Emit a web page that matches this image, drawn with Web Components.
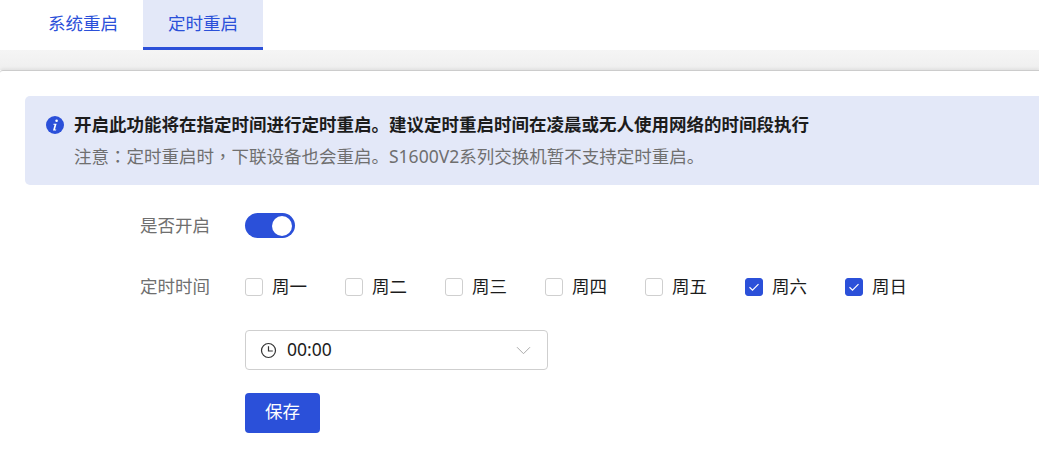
<!DOCTYPE html>
<html lang="zh">
<head>
<meta charset="utf-8">
<title>定时重启</title>
<style>
    html, body { margin: 0; height: 100%; background: #fff; overflow: hidden; }
    body { font-family: "Noto Sans", "Noto Sans CJK SC", sans-serif; font-size: 17.5px; }
</style>
</head>
<body>
<reboot-page></reboot-page>

<script>
class RebootTabs extends HTMLElement {
    constructor(){
        super();
        this.attachShadow({ mode: 'open' }).innerHTML = `
        <style>
            :host { display: flex; height: 50px; padding-left: 23px; background: #fff; }
            .tab {
                box-sizing: border-box;
                width: 120px;
                height: 50px;
                padding-top: 11px;
                text-align: center;
                line-height: 24px;
                color: #2b50d9;
            }
            .tab.active { background: #e3e8f8; border-bottom: 3px solid #2b50d9; }
        </style>
        <div class="tab">系统重启</div>
        <div class="tab active">定时重启</div>
        `;
    }
}
customElements.define('reboot-tabs', RebootTabs);

class RebootAlert extends HTMLElement {
    constructor(){
        super();
        this.attachShadow({ mode: 'open' }).innerHTML = `
        <style>
            :host {
                display: flex;
                box-sizing: border-box;
                width: 1100px;
                height: 89px;
                margin-left: 25px;
                padding: 15px 0 0 21px;
                gap: 10px;
                background: #e3e8f8;
                border-radius: 5px;
            }
            svg { flex: none; margin-top: 5px; }
            .title { line-height: 27px; font-weight: 700; color: #1c1c1c; }
            .note { line-height: 27px; margin-top: 4px; color: #6f6f6f; }
        </style>
        <svg width="18" height="18" viewBox="0 0 18 18">
            <circle cx="9" cy="9" r="9" fill="#2b50d9"/>
            <circle cx="10.6" cy="4.8" r="1.3" fill="#fff"/>
            <path d="M7.6 7.8h3l-1.6 5.6h1.3l-.3 1H7l1.6-5.6H7.3z" fill="#fff"/>
        </svg>
        <div>
            <div class="title"><slot name="title"></slot></div>
            <div class="note"><slot name="note"></slot></div>
        </div>
        `;
    }
}
customElements.define('reboot-alert', RebootAlert);

class FormRow extends HTMLElement {
    constructor(){
        super();
        this.attachShadow({ mode: 'open' }).innerHTML = `
        <style>
            :host { display: grid; grid-template-columns: 210px 1fr; column-gap: 35px; align-items: center; }
            .label { text-align: right; line-height: 22px; padding-bottom: 2px; color: #6f6f6f; }
        </style>
        <div class="label"></div>
        <div><slot></slot></div>
        `;
    }
    connectedCallback(){
        this.shadowRoot.querySelector('.label').textContent = this.getAttribute('label') || '';
    }
}
customElements.define('form-row', FormRow);

class ToggleSwitch extends HTMLElement {
    constructor(){
        super();
        this.attachShadow({ mode: 'open' }).innerHTML = `
        <style>
            :host {
                display: block;
                position: relative;
                width: 50px;
                height: 25px;
                border-radius: 13px;
                background: #2b50d9;
            }
            .knob {
                position: absolute;
                right: 3px;
                top: 2.5px;
                width: 20px;
                height: 20px;
                border-radius: 50%;
                background: #fff;
            }
        </style>
        <div class="knob"></div>
        `;
    }
}
customElements.define('toggle-switch', ToggleSwitch);

class DayCheck extends HTMLElement {
    constructor(){
        super();
        this.attachShadow({ mode: 'open' }).innerHTML = `
        <style>
            :host { display: flex; align-items: center; width: 100px; gap: 9px; color: #1c1c1c; }
            .text { line-height: 22px; padding-bottom: 2px; }
            .box {
                box-sizing: border-box;
                width: 18px;
                height: 18px;
                border: 1px solid #cfcfcf;
                border-radius: 3px;
                background: #fff;
            }
            svg { display: none; width: 16px; height: 16px; }
            :host([checked]) .box { background: #2b50d9; border-color: #2b50d9; }
            :host([checked]) svg { display: block; }
        </style>
        <div class="box">
            <svg viewBox="0 0 16 16"><path d="M3.5 8.2l3 2.9 6-6" fill="none" stroke="#fff" stroke-width="1.2"/></svg>
        </div>
        <div class="text"><slot></slot></div>
        `;
    }
}
customElements.define('day-check', DayCheck);

class TimeSelect extends HTMLElement {
    constructor(){
        super();
        this.attachShadow({ mode: 'open' }).innerHTML = `
        <style>
            :host {
                display: flex;
                align-items: center;
                box-sizing: border-box;
                width: 303px;
                height: 40px;
                padding: 0 16px 0 14px;
                border: 1px solid #cfcfcf;
                border-radius: 4px;
                color: #1c1c1c;
            }
            .value { margin-left: 10px; flex: 1; line-height: 22px; padding-bottom: 2px; }
        </style>
        <svg width="17" height="17" viewBox="0 0 17 17" fill="none" stroke="#333" stroke-width="1.2">
            <circle cx="8.5" cy="8.5" r="7"/>
            <path d="M8.5 4.2V9H12.8"/>
        </svg>
        <span class="value"><slot></slot></span>
        <svg width="15" height="9" viewBox="0 0 15 9" fill="none" stroke="#aaa" stroke-width="1">
            <path d="M1 1.2l6.5 6.5L14 1.2"/>
        </svg>
        `;
    }
}
customElements.define('time-select', TimeSelect);

class SaveButton extends HTMLElement {
    constructor(){
        super();
        this.attachShadow({ mode: 'open' }).innerHTML = `
        <style>
            :host {
                display: flex;
                align-items: center;
                justify-content: center;
                box-sizing: border-box;
                width: 75px;
                height: 40px;
                padding-bottom: 6px;
                border-radius: 4px;
                background: #2b50d9;
                color: #fff;
            }
        </style>
        <slot></slot>
        `;
    }
}
customElements.define('save-button', SaveButton);

class RebootPage extends HTMLElement {
    constructor(){
        super();
        this.attachShadow({ mode: 'open' }).innerHTML = `
        <style>
            :host { display: block; height: 456px; overflow: hidden; background: #fff; }
            .band { height: 20px; background: linear-gradient(#f5f5f5, #efefef); }
            .panel {
                border-top: 1px solid #cccccc;
                border-top-left-radius: 3px;
                padding-top: 25px;
                background: #fff;
                box-shadow: 0 -2px 3px rgba(0,0,0,.05);
            }
            .rows { display: flex; flex-direction: column; }
            .switch-row { margin-top: 28px; }
            .days-row { margin-top: 37px; }
            .days { display: flex; }
            .time-row { margin-top: 31px; }
            .save-row { margin-top: 23px; }
            .mid { font-family: "Noto Sans CJK TC", sans-serif; }
        </style>
        <reboot-tabs></reboot-tabs>
        <div class="band"></div>
        <div class="panel">
            <reboot-alert>
                <span slot="title">开启此功能将在指定时间进行定时重启。建议定时重启时间在凌晨或无人使用网络的时间段执行</span>
                <span slot="note">注意<span class="mid" lang="zh-TW">：</span>定时重启时<span class="mid" lang="zh-TW">，</span>下联设备也会重启。S1600V2系列交换机暂不支持定时重启。</span>
            </reboot-alert>
            <div class="rows">
                <form-row class="switch-row" label="是否开启"><toggle-switch></toggle-switch></form-row>
                <form-row class="days-row" label="定时时间">
                    <div class="days">
                        <day-check>周一</day-check>
                        <day-check>周二</day-check>
                        <day-check>周三</day-check>
                        <day-check>周四</day-check>
                        <day-check>周五</day-check>
                        <day-check checked>周六</day-check>
                        <day-check checked>周日</day-check>
                    </div>
                </form-row>
                <form-row class="time-row"><time-select>00:00</time-select></form-row>
                <form-row class="save-row"><save-button>保存</save-button></form-row>
            </div>
        </div>
        `;
    }
}
customElements.define('reboot-page', RebootPage);
</script>
</body>
</html>
